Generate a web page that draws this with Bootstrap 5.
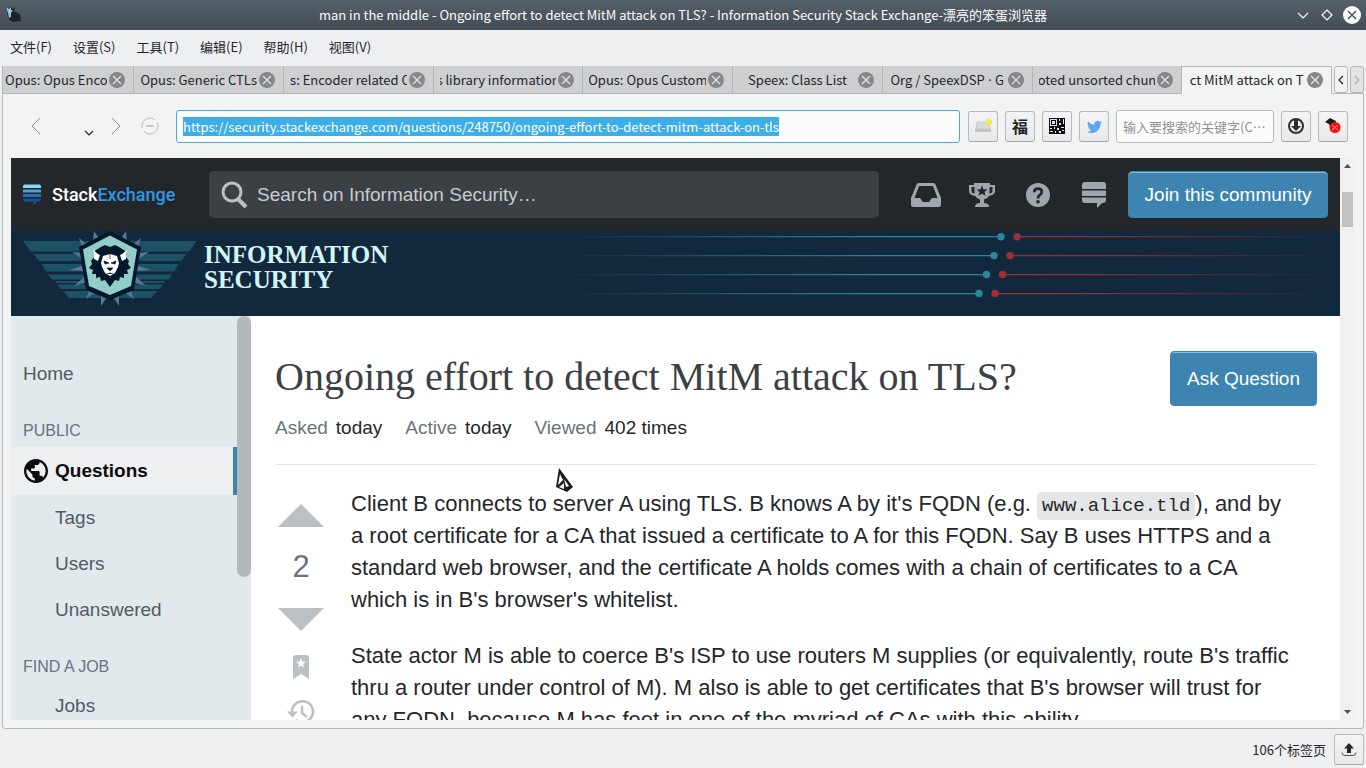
<!DOCTYPE html>
<html lang="en">
<head>
<meta charset="utf-8">
<meta name="viewport" content="width=device-width, initial-scale=1">
<title>man in the middle - Ongoing effort to detect MitM attack on TLS?</title>
<link rel="stylesheet" href="https://cdn.jsdelivr.net/npm/bootstrap@5.3.0/dist/css/bootstrap.min.css">
<style>
:root{--ui:"Noto Sans CJK SC",sans-serif;--site:"Liberation Sans",Arial,sans-serif}
body{font:13px/20px var(--ui);color:#232629;background:#eeeff1}
svg{display:block;flex:none}
button{border:0;padding:0;background:none;color:inherit}
a{text-decoration:none;color:inherit}
.window-bar{height:30px;background:linear-gradient(#556069,#434c52);color:#fcfcfc;padding:0 5px}
.window-side{width:66px}
.menu-row{height:36px;padding:0 0 2px 10px;gap:21px}
.tab-row{height:28px;padding:0 2px;position:relative;z-index:1;margin-bottom:-1px}
.page-tab{flex:150 1 0;min-width:0;height:28px;background:#cecfd1;border-left:1px solid #b3b5b7;border-bottom:1px solid #b3b5b7;padding:0 8px 0 6px;gap:2px}
.page-tab.tab-first{flex-grow:134;padding-left:2px}
.page-tab.tab-active{background:#f2f4f3;border-top:1px solid #b3b5b7;border-right:1px solid #b3b5b7;border-bottom-color:#f2f4f3}
.tab-text{flex:1 1 0;min-width:0;overflow:hidden;display:flex;justify-content:center;white-space:nowrap;font-size:13px}
.tab-dot{font-family:"Noto Sans",sans-serif;white-space:pre}
.tab-scrolls{padding-left:2px;gap:2px}
.tab-scroll{width:14px;height:27px;border:1px solid #b3b5b7;border-radius:3px;background:#f2f3f4}
.tab-scroll:disabled{background:#e2e3e5;color:#aaa}
.browser-frame{margin:0 2px;border:1px solid #b6b9ba;border-radius:0 0 3px 3px;background:#f2f4f3;padding:0 8px 8px}
.tool-row{height:64px;padding:0 7px 0 0}
.nav-tools{width:165px;padding-left:16px;color:#8c8f91}
.history-btn{margin-left:34px;color:#232629}
.url-box{height:33px;border:1px solid #3daee9;border-radius:3px;background:#fcfcfc;padding:0 6px;font-size:13px;color:#232629;outline:0}
.url-box::selection{background:rgba(61,174,233,.996);color:#fff}
.tool-btn{width:30px;height:31px;border:1px solid #b7babc;border-bottom-color:#a5a8aa;border-radius:3px;background:linear-gradient(#f3f4f5,#e7e9eb);display:flex;align-items:center;justify-content:center;flex:none}
.tool-set{gap:7px}
.find-box{width:158px;height:33px;border:1px solid #b7babc;border-radius:3px;background:#fcfcfc;padding:0 0 0 6px;font-size:13px;outline:0}
.find-box::placeholder{color:#8f9294;opacity:1}
.status-row{height:39px;padding:2px 2px 0 0;gap:8px}
.scroll-track{width:15px;background:#f0f0f0}
.scroll-thumb{width:11px;height:35px;background:#c1c1c1}
.site{background:#fff;font-family:var(--site);font-size:19px;line-height:24px;color:#242729}
.site-top{height:73px;background:#242729;padding:0 12px;position:relative;z-index:1}
.brand{width:186px;gap:11px;font:500 18px/24px Roboto,sans-serif;color:#fff}
.brand b{font-weight:500;color:#2f96e8}
.site-search{height:47px;background:#3b4045;border-radius:5px;padding:0 12px;gap:9px;margin-right:19px}
.site-search input{border:0;background:none;color:#c8ccd0;outline:0;padding:0}
.site-search input::placeholder{color:#c8ccd0;opacity:1}
.top-icon{width:56px;height:47px;display:flex;align-items:center;justify-content:center;color:#9fa6ad}
.btn-site{background:#3d84b0;color:#fff;border-radius:4px;border:1px solid #3d84b0;box-shadow:inset 0 1px 0 #8fbddb;font-size:19px;line-height:24px;flex:none;--bs-btn-hover-bg:#3172a0;--bs-btn-hover-color:#fff}
.btn-join{height:47px;width:200px;margin-left:6px;padding:0}
.btn-ask{height:55px;width:147px;padding:0}
.site-banner{height:85px;background:#12293d;padding-left:12px}
.banner-name{font:bold 25px/25px "Liberation Serif",serif;color:#d3f5f7;padding:11px 0 0 7px}
.side{width:240px;background:#e1e9ec;color:#535a60}
.side-list{padding-top:35px}
.side-list a{display:flex;align-items:center;height:46px;padding-left:44px}
.side-list a.side-home{padding-left:12px}
.side-list a.side-here{height:48px;padding-left:13px;gap:7px;background:#eeeff1;color:#0c0d0e;font-weight:700;border-right:4px solid #3d84b0}
.side-label{height:35px;margin-top:15px;padding-left:12px;font-size:16px;line-height:37px;color:#6a737c}
.side-thumb{width:14px;height:261px;border-radius:7px;background:#b1b9bb}
.article{padding:35px 23px 0 24px;min-width:0}
.q-title{font:40px/52px "Liberation Serif",serif;color:#3b4045;margin:0;white-space:nowrap}
.q-meta{gap:23px;padding:10px 0 24px;border-bottom:1px solid #e4e6e8}
.q-meta span{color:#6a737c;margin-right:8px}
.q-row{padding:23px 24px 0 0}
.vote-col{width:52px;color:#bbc0c4;padding-top:16px}
.vote-num{font-size:31px;line-height:40px;color:#6a737c;margin:20px 0 21px}
.q-body{font-size:22px;line-height:32px}
.q-body p{margin:0 0 24px}
.q-body code{font:19px/22px "Liberation Mono",monospace;color:#242729;background:#e4e6e8;border-radius:4px;padding:3px 5px}
.pointer{position:absolute;left:554px;top:466px;z-index:5}
</style>
</head>
<body class="vh-100 d-flex flex-column overflow-hidden">
<svg width="0" height="0" class="position-absolute" aria-hidden="true">
<symbol id="tabx" viewBox="0 0 16 16"><circle cx="8" cy="8" r="8" fill="#85878a"/><path d="M4 4l8 8M12 4l-8 8" stroke="#e3e4e5" stroke-width="1.2"/></symbol>
</svg>

<header class="window-bar d-flex align-items-center flex-shrink-0">
<div class="window-side"><svg width="18" height="20" viewBox="0 0 18 20"><path d="M1 2l3 1 2-2 1 3 3-2-1 5-1 5-3 4-2-5z" fill="#14202a"/><path d="M1 2l3 2 2-2 0 3 2 0-2 3v4l-2 1-1-5z" fill="#9fc4d4"/><path d="M8 9l3-3 1 2 3 1 1 7-8 1-3-2z" fill="#1c2226"/></svg></div>
<div class="flex-grow-1 text-center">man in the middle - Ongoing effort to detect MitM attack on TLS? - Information Security Stack Exchange-漂亮的笨蛋浏览器</div>
<div class="window-side d-flex align-items-center">
<button aria-label="Minimize" class="me-2"><svg width="16" height="16" viewBox="0 0 16 16" fill="none" stroke="#fcfcfc" stroke-width="1.2"><path d="M3 6l5 5 5-5"/></svg></button>
<button aria-label="Maximize" class="me-2"><svg width="16" height="16" viewBox="0 0 16 16" fill="none" stroke="#fcfcfc" stroke-width="1.2"><path d="M8 3l5 5-5 5-5-5z"/></svg></button>
<button aria-label="Close"><svg width="18" height="18" viewBox="0 0 18 18"><circle cx="9" cy="9" r="9" fill="#fcfcfc"/><path d="M5 5l8 8M13 5l-8 8" stroke="#444d53" stroke-width="1.3"/></svg></button>
</div>
</header>

<nav class="menu-row d-flex align-items-center flex-shrink-0" aria-label="Menu">
<button>文件(F)</button><button>设置(S)</button><button>工具(T)</button><button>编辑(E)</button><button>帮助(H)</button><button>视图(V)</button>
</nav>

<div class="tab-row d-flex flex-shrink-0">
<div class="page-tab tab-first d-flex align-items-center"><div class="tab-text justify-content-start">Opus: Opus Enco</div><button aria-label="Close tab"><svg width="16" height="16"><use href="#tabx"/></svg></button></div>
<div class="page-tab d-flex align-items-center"><div class="tab-text">Opus: Generic CTLs</div><button aria-label="Close tab"><svg width="16" height="16"><use href="#tabx"/></svg></button></div>
<div class="page-tab d-flex align-items-center"><div class="tab-text justify-content-start">s: Encoder related C</div><button aria-label="Close tab"><svg width="16" height="16"><use href="#tabx"/></svg></button></div>
<div class="page-tab d-flex align-items-center"><div class="tab-text">s library information</div><button aria-label="Close tab"><svg width="16" height="16"><use href="#tabx"/></svg></button></div>
<div class="page-tab d-flex align-items-center"><div class="tab-text">Opus: Opus Custom</div><button aria-label="Close tab"><svg width="16" height="16"><use href="#tabx"/></svg></button></div>
<div class="page-tab d-flex align-items-center"><div class="tab-text">Speex: Class List</div><button aria-label="Close tab"><svg width="16" height="16"><use href="#tabx"/></svg></button></div>
<div class="page-tab d-flex align-items-center"><div class="tab-text">Org / SpeexDSP<span class="tab-dot"> · </span>G</div><button aria-label="Close tab"><svg width="16" height="16"><use href="#tabx"/></svg></button></div>
<div class="page-tab d-flex align-items-center"><div class="tab-text">oted unsorted chun</div><button aria-label="Close tab"><svg width="16" height="16"><use href="#tabx"/></svg></button></div>
<div class="page-tab tab-active d-flex align-items-center"><div class="tab-text">ct MitM attack on T</div><button aria-label="Close tab"><svg width="16" height="16"><use href="#tabx"/></svg></button></div>
<div class="tab-scrolls d-flex flex-shrink-0"><button class="tab-scroll" aria-label="Scroll tabs left"><svg width="12" height="12" viewBox="0 0 12 12" fill="none" stroke="currentColor" stroke-width="1.2"><path d="M8 2L4 6l4 4"/></svg></button><button class="tab-scroll" disabled aria-label="Scroll tabs right"><svg width="12" height="12" viewBox="0 0 12 12" fill="none" stroke="currentColor" stroke-width="1.2"><path d="M4 2l4 4-4 4"/></svg></button></div>
</div>

<section class="browser-frame flex-grow-1 d-flex flex-column overflow-hidden">
<div class="tool-row d-flex align-items-center flex-shrink-0">
<div class="nav-tools d-flex align-items-center flex-shrink-0">
<button aria-label="Back"><svg width="18" height="18" viewBox="0 0 18 18" fill="none" stroke="currentColor"><path d="M13 1L5 9l8 8"/></svg></button>
<button aria-label="History" class="history-btn me-2 pt-3 ps-1"><svg width="12" height="18" viewBox="0 0 12 18" fill="none" stroke="currentColor" stroke-width="1.2"><path d="M2 6l4 4 4-4"/></svg></button>
<button aria-label="Forward" class="ms-1"><svg width="18" height="18" viewBox="0 0 18 18" fill="none" stroke="currentColor"><path d="M5 1l8 8-8 8"/></svg></button>
<button aria-label="Stop" class="ms-3"><svg width="18" height="18" viewBox="0 0 18 18" fill="none" stroke="#b9bbbc"><circle cx="9" cy="9" r="8" stroke-dasharray="20 3"/><path d="M5 9h8" stroke-width="1.6"/></svg></button>
</div>
<input class="url-box flex-grow-1 me-2" id="url" aria-label="Address" value="https://security.stackexchange.com/questions/248750/ongoing-effort-to-detect-mitm-attack-on-tls">
<div class="tool-set d-flex align-items-center">
<button class="tool-btn" aria-label="Notes"><svg width="18" height="16" viewBox="0 0 18 16"><path d="M3 4h12l1 7H2z" fill="#dcdcda" stroke="#bbb" stroke-width=".7"/><path d="M1 11h16v3H1z" fill="#c4c4c2"/><circle cx="15" cy="4" r="3" fill="#f6ea3c"/></svg></button>
<button class="tool-btn fw-bold fs-6" aria-label="Fortune">福</button>
<button class="tool-btn" aria-label="QR code"><svg width="16" height="16" viewBox="0 0 16 16"><path d="M0 0h16v16H0z" fill="#0b0d12"/><path d="M1 1h7v7H1zM10 1h1v2h-1zM14 1h1v5h-1zM10 5h2v2h-2zM1 10h2v1H1zM5 9h1v2H5zM8 10h2v2H8zM12 9h3v1h-3zM1 13h3v1H1zM6 13h1v2H6zM10 13h2v2h-2zM13 12h2v1h-2z" fill="#dfe3ec"/><path d="M2 2h5v5H2z" fill="#0b0d12"/><path d="M3 3h3v3H3z" fill="#dfe3ec"/></svg></button>
<button class="tool-btn" aria-label="Twitter"><svg width="15" height="15" viewBox="0 0 16 16" fill="#5ba4ef"><path d="M5 15c6 0 9.300-5 9.300-9.300v-.4A6.700 6.700 0 0 0 16 3.500a6.600 6.600 0 0 1-1.900.5A3.300 3.300 0 0 0 15.600 2.200a6.600 6.600 0 0 1-2.100.8A3.300 3.300 0 0 0 7.900 6 9.300 9.300 0 0 1 1.100 2.600 3.300 3.300 0 0 0 2.100 7 3.200 3.200 0 0 1 .7 6.600 3.300 3.300 0 0 0 3.300 9.800a3.200 3.200 0 0 1-1.500.1 3.300 3.300 0 0 0 3.100 2.200A6.600 6.600 0 0 1 0 13.600 9.300 9.300 0 0 0 5 15"/></svg></button>
<input class="find-box" lang="zh-CN" aria-label="Keyword search" placeholder="输入要搜索的关键字(C⋯">
<button class="tool-btn" aria-label="Download"><svg width="18" height="18" viewBox="0 0 18 18"><circle cx="9" cy="9" r="7" fill="none" stroke="#2d3033" stroke-width="2"/><path d="M7 3h4v6h3l-5 5-5-5h3z" fill="#2d3033"/></svg></button>
<button class="tool-btn" aria-label="Blocker"><svg width="18" height="18" viewBox="0 0 18 18"><path d="M1 5l5-4 6 3-1 4-5 2-1-3z" fill="#181a1b"/><circle cx="11" cy="10.500" r="5.500" fill="#f80d0d"/><path d="M8 8l6 5M14 8l-6 5" stroke="#fbb" stroke-width=".9"/></svg></button>
</div>
</div>

<div class="d-flex flex-grow-1 overflow-hidden">
<div class="site flex-grow-1 d-flex flex-column overflow-hidden">
<header class="site-top d-flex align-items-center flex-shrink-0">
<a class="brand d-flex align-items-center flex-shrink-0" href="#"><svg width="18" height="22" viewBox="0 0 18 22"><path d="M0 4V2.500Q0 .5 2 .5h14q2 0 2 2V4z" fill="#8fd8f7"/><path d="M0 5.500h18v3H0z" fill="#46a2da"/><path d="M0 10h18v3H0z" fill="#2d6db5"/><path d="M0 14.500h18q0 3-2 3h-2l-3.500 4v-4H2q-2 0-2-3z" fill="#155397"/></svg><span>Stack<b>Exchange</b></span></a>
<label class="site-search d-flex align-items-center flex-grow-1"><svg width="27" height="28" viewBox="0 0 27 28" fill="none" stroke="#bbc0c4"><circle cx="11" cy="11" r="9" stroke-width="3"/><path d="M17 18l8 8" stroke-width="4"/></svg><input class="flex-grow-1" type="text" aria-label="Search" placeholder="Search on Information Security…"></label>
<a class="top-icon" href="#" aria-label="Inbox"><svg width="30" height="26" viewBox="0 0 30 26" fill="currentColor" fill-rule="evenodd"><path d="M7.500 1h15q1.500 0 2 1.500L30 16v6.500Q30 25 27.500 25h-25Q0 25 0 22.500V16L5.500 2.500Q6 1 7.500 1zM8 4L3.500 16H9l3 4h6l3-4h5.500L22 4z"/></svg></a>
<a class="top-icon" href="#" aria-label="Achievements"><svg width="26" height="26" viewBox="0 0 26 26" fill="currentColor" fill-rule="evenodd"><path d="M5 1h16v2h5v6q0 4-6 5-2 3-5 3.500v3.500q5 0 5 4H6q0-4 5-4v-3.500Q8 17 6 14 0 13 0 9V3h5zM2.500 5v4q0 2 3 2.500V5zM20.500 5v6.500q3-.5 3-2.500V5zM13 3.500l-1.500 3.700-4 .3 3 2.500-1 3.800 3.500-2.100 3.500 2.100-1-3.800 3-2.500-4-.3z"/></svg></a>
<a class="top-icon" href="#" aria-label="Help"><svg width="24" height="24" viewBox="0 0 24 24"><circle cx="12" cy="12" r="12" fill="currentColor"/><path d="M8.300 9.300Q8.300 5.700 12 5.700t3.800 3.200q0 1.700-1.900 3T12 15.500" fill="none" stroke="#242729" stroke-width="2.800"/><circle cx="12" cy="18.800" r="1.800" fill="#242729"/></svg></a>
<a class="top-icon" href="#" aria-label="Sites"><svg width="24" height="26" viewBox="0 0 24 26" fill="currentColor"><path d="M0 7V3q0-3 3-3h18q3 0 3 3v4zM0 8.500h24v5.500H0zM0 15.500h24V18q0 3-3 3h-1l-5 5v-5H3q-3 0-3-3z"/></svg></a>
<a class="btn btn-site btn-join d-flex align-items-center justify-content-center" href="#">Join this community</a>
</header>

<div class="site-banner d-flex flex-shrink-0">
<svg width="174" height="85" viewBox="23 231 174 85">
<path d="M23 241h174l-8 10.500H31zM33.500 254h153l-5.500 7H39zM41.500 264h137l-4 7.500H46zM48 274.500h124l-3 5H52zM55 281h110l-1 2H56zM57 284.500h106l-3 4.500H61zM63 291h94l-6 7H69z" fill="#1d5164"/>
<path d="M94 231l6 9-7 1zM126 231l-6 9 7 1zM79 238l10 8-6 4zM141 238l-10 8 6 4zM72 252l12 1v7zM149 252l-12 1v7zM69 270l16-5v6zM151 270l-16-5v6zM74 286l12-11 2 7zM146 286l-12-11-2 7zM86 299l4-11 6 4zM134 299l-4-11-6 4zM101 306l0-12 6 3zM119 306l0-12-6 3z" fill="#57779a"/>
<path d="M110 231l31 16-7 43-24 10-24-10-7-43z" fill="#03182b"/>
<path d="M110 235.500l27 14-6 36.500-21 9-21-9-6-36.500z" fill="#94cdc7"/>
<path d="M110 247l5-2 4 2 5 3 3 3-1 4 3 4-1 3 3 4-4 2 1 4-4 0 0 4-4-1-1 4-4-1-5 7-5-7-4 1-1-4-4 1 0-4-4 0 1-4-4-2 3-4-1-3 3-4-1-4 3-3 5-3 4-2z" fill="#03182b"/>
<path d="M93 250l5 4 2 1-2 6-4-2zM127 250l-5 4-2 1 2 6 4-2zM110 254l7 2 2 7-1 4-3 6-5 3-5-3-3-6-1-4 2-7z" fill="#fff"/>
<path d="M104 261l5 2-4 1zM116 261l-5 2 4 1zM107 268h6l-3 3zM107 274l3-1 3 1M110 254v5" fill="#03182b" stroke="#03182b" stroke-width=".7"/>
</svg>
<div class="banner-name">INFORMATION<br>SECURITY</div>
<svg class="ms-auto" width="780" height="85" viewBox="560 231 780 85">
<defs><linearGradient id="teal" gradientUnits="userSpaceOnUse" x1="560" y1="0" x2="1000" y2="0"><stop stop-color="#2c879b" stop-opacity="0"/><stop offset=".75" stop-color="#2c879b"/></linearGradient><linearGradient id="red" gradientUnits="userSpaceOnUse" x1="1000" y1="0" x2="1336" y2="0"><stop stop-color="#a02f35"/><stop offset=".3" stop-color="#a02f35" stop-opacity=".85"/><stop offset="1" stop-color="#a02f35" stop-opacity="0"/></linearGradient></defs>
<path d="M560 236h441v1.300H560zM560 255h434v1.300H560zM560 274h426v1.300H560zM560 293h419v1.300H560z" fill="url(#teal)"/>
<path d="M1017 236h319v1.300h-319zM1010 255h326v1.300h-326zM1003 274h333v1.300h-333zM995 293h341v1.300H995z" fill="url(#red)"/>
<g fill="#2c879b"><circle cx="1001" cy="236.700" r="3.700"/><circle cx="994" cy="255.600" r="3.700"/><circle cx="986.500" cy="274.500" r="3.700"/><circle cx="979" cy="293.400" r="3.700"/></g>
<g fill="#a02f35"><circle cx="1017" cy="236.700" r="3.700"/><circle cx="1010" cy="255.600" r="3.700"/><circle cx="1002.500" cy="274.500" r="3.700"/><circle cx="995" cy="293.400" r="3.700"/></g>
</svg>
</div>

<div class="d-flex flex-grow-1 overflow-hidden">
<aside class="side d-flex flex-shrink-0">
<nav class="side-list flex-grow-1" aria-label="Site">
<a class="side-home" href="#">Home</a>
<div class="side-label">PUBLIC</div>
<a class="side-here" href="#"><svg width="24" height="24" viewBox="2 2 20 20" fill="#0c0d0e"><path d="M12 2C6.480 2 2 6.480 2 12s4.480 10 10 10 10-4.480 10-10S17.520 2 12 2zm-1 17.930c-3.950-.490-7-3.850-7-7.930 0-.620.080-1.210.210-1.790L9 15v1c0 1.100.900 2 2 2v1.930zm6.900-2.540c-.260-.810-1-1.390-1.900-1.390h-1v-3c0-.550-.450-1-1-1H8v-2h2c.550 0 1-.450 1-1V7h2c1.100 0 2-.900 2-2v-.410c2.930 1.190 5 4.060 5 7.410 0 2.080-.800 3.970-2.100 5.390z"/></svg>Questions</a>
<a href="#">Tags</a><a href="#">Users</a><a href="#">Unanswered</a>
<div class="side-label">FIND A JOB</div>
<a href="#">Jobs</a>
</nav>
<div class="side-thumb"></div>
</aside>

<main class="article flex-grow-1">
<div class="d-flex justify-content-between align-items-start">
<h1 class="q-title">Ongoing effort to detect MitM attack on TLS?</h1>
<a class="btn btn-site btn-ask d-flex align-items-center justify-content-center" href="#">Ask Question</a>
</div>
<div class="q-meta d-flex"><div><span>Asked</span>today</div><div><span>Active</span>today</div><div><span>Viewed</span>402 times</div></div>
<div class="q-row d-flex gap-4">
<div class="vote-col d-flex flex-column align-items-center flex-shrink-0">
<button aria-label="Vote up"><svg width="46" height="23" viewBox="0 0 46 23" fill="#bbc0c4"><path d="M0 23L23 0l23 23z"/></svg></button>
<div class="vote-num">2</div>
<button aria-label="Vote down"><svg width="46" height="23" viewBox="0 0 46 23" fill="#bbc0c4"><path d="M0 0h46L23 23z"/></svg></button>
<button class="mt-4" aria-label="Bookmark"><svg width="16" height="24" viewBox="0 0 16 24" fill="#bbc0c4" fill-rule="evenodd"><path d="M3 0h10q3 0 3 3v21l-8-5-8 5V3q0-3 3-3zM8 3L6.700 6.500 3 6.700l2.900 2.200L5 12.500l3-2 3 2-.9-3.600L13 6.700l-3.700-.2z"/></svg></button>
<a href="#" class="mt-3 pt-1" aria-label="Timeline"><svg width="28" height="26" viewBox="0 0 28 26" fill="none" stroke="#bbc0c4" stroke-width="2.500"><path d="M5 14A10.500 10.500 0 1 1 9 21M15 7v7l5 4"/><path d="M0 12.500h11l-5.500 6z" fill="#bbc0c4" stroke="none"/></svg></a>
</div>
<div class="q-body">
<p>Client B connects to server A using TLS. B knows A by it's FQDN (e.g. <code>www.alice.tld</code>), and by a root certificate for a CA that issued a certificate to A for this FQDN. Say B uses HTTPS and a standard web browser, and the certificate A holds comes with a chain of certificates to a CA which is in B's browser's whitelist.</p>
<p>State actor M is able to coerce B's ISP to use routers M supplies (or equivalently, route B's traffic thru a router under control of M). M also is able to get certificates that B's browser will trust for any FQDN, because M has feet in one of the myriad of CAs with this ability.</p>
</div>
</div>
</main>
</div>
</div>
<div class="scroll-track d-flex flex-column align-items-center flex-shrink-0">
<svg class="mb-3" width="15" height="18" viewBox="0 0 15 18"><path d="M4 10l3.500-4L11 10z" fill="#505050"/></svg>
<div class="scroll-thumb"></div>
<svg class="mt-auto" width="15" height="17" viewBox="0 0 15 17"><path d="M4 7l3.500 4L11 7z" fill="#505050"/></svg>
</div>
</div>
</section>

<footer class="status-row d-flex align-items-center justify-content-end flex-shrink-0">
<span>106个标签页</span>
<button class="tool-btn" aria-label="Scroll to top"><svg width="16" height="16" viewBox="0 0 16 16"><path d="M8 1l5 5.500h-3V11H6V6.500H3z" fill="#232629"/><path d="M1 10.500q0 3 3 3h8q3 0 3-3" fill="none" stroke="#55585a"/></svg></button>
</footer>

<svg class="pointer" width="20" height="28" viewBox="0 0 20 28" aria-hidden="true"><path d="M5 2l14 19-6 5L2 21z" fill="#1b1b1b"/><path d="M6 8l-2 11 5-5zM10 13l5 7-3 1zM10 17l-5 4 5 2z" fill="#fff"/></svg>

<script src="https://cdn.jsdelivr.net/npm/bootstrap@5.3.0/dist/js/bootstrap.bundle.min.js"></script>
<script>
const url=document.getElementById("url");
url.focus({preventScroll:true});
url.select();
</script>
</body>
</html>
